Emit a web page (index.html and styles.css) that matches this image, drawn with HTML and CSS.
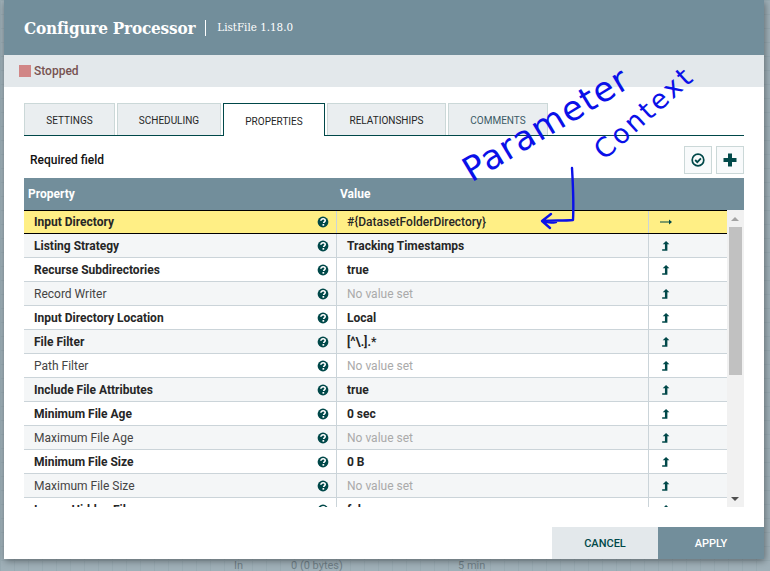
FILE: index.html
```html
<!DOCTYPE html>
<html lang="en">
<head>
<meta charset="utf-8">
<title>Configure Processor</title>
<link rel="stylesheet" href="styles.css">
</head>
<body>
<svg class="defs" width="0" height="0">
  <symbol id="q" viewBox="0 0 12 12"><circle cx="6" cy="6" r="5.400" fill="#004849"/><path d="M3.900 4.800c0-1.300 1-2 2.200-2s2.100.7 2.100 1.700c0 1.400-1.500 1.300-1.500 2.500" fill="none" stroke="#fff" stroke-width="1.600"/><rect x="5.500" y="8" width="1.700" height="1.700" fill="#fff"/></symbol>
  <symbol id="u" viewBox="0 0 8 9"><path d="M4.500 0L7.500 3H5.700V8.800H1V7.400H3.500V3H1.500z" fill="#004849"/></symbol>
</svg>
<div class="canvas">
  <div class="ghost ghost-in">In</div>
  <div class="ghost ghost-bytes">0 (0 bytes)</div>
  <div class="ghost ghost-min">5 min</div>
</div>
<main class="dialog">
  <header class="head">
    <h1 class="title">Configure Processor</h1>
    <span class="subtitle">ListFile 1.18.0</span>
  </header>
  <div class="status"><span class="square"></span><span class="status-text">Stopped</span></div>
  <div class="body">
    <nav class="tabs">
      <div class="tab">SETTINGS</div>
      <div class="tab t2">SCHEDULING</div>
      <div class="tab active">PROPERTIES</div>
      <div class="tab t4">RELATIONSHIPS</div>
      <div class="tab t5">COMMENTS</div>
    </nav>
    <div class="tools">
      <span class="req">Required field</span>
      <div class="btns">
        <button class="btn"><svg width="14" height="14" viewBox="0 0 14 14"><circle cx="7" cy="7" r="5.800" fill="none" stroke="#004849" stroke-width="1.700"/><path d="M4.200 7l2.100 2.100 3.600-3.700" fill="none" stroke="#004849" stroke-width="1.800"/></svg></button>
        <button class="btn"><svg width="14" height="14" viewBox="0 0 14 14"><path d="M5 .5h4V5h4.500v4H9v4.500H5V9H.5V5H5z" fill="#004849"/></svg></button>
      </div>
    </div>
    <div class="thead"><span class="th-prop">Property</span><span class="th-val">Value</span></div>
    <div class="grid">
      <div class="rows">
        <div class="row sel"><div class="c1 b">Input Directory<svg class="q"><use href="#q"/></svg></div><div class="c2">#{DatasetFolderDirectory}</div><div class="c3"><svg class="arr" viewBox="0 0 12 8"><path d="M0 3.500h9V1.500L12 4 9 6.500v-2H0z" fill="#004849"/></svg></div></div>
        <div class="row odd"><div class="c1 b">Listing Strategy<svg class="q"><use href="#q"/></svg></div><div class="c2 m">Tracking Timestamps</div><div class="c3"><svg class="up"><use href="#u"/></svg></div></div>
        <div class="row"><div class="c1 b">Recurse Subdirectories<svg class="q"><use href="#q"/></svg></div><div class="c2 m">true</div><div class="c3"><svg class="up"><use href="#u"/></svg></div></div>
        <div class="row odd"><div class="c1">Record Writer<svg class="q"><use href="#q"/></svg></div><div class="c2 none">No value set</div><div class="c3"><svg class="up"><use href="#u"/></svg></div></div>
        <div class="row"><div class="c1 b">Input Directory Location<svg class="q"><use href="#q"/></svg></div><div class="c2 m">Local</div><div class="c3"><svg class="up"><use href="#u"/></svg></div></div>
        <div class="row odd"><div class="c1 b">File Filter<svg class="q"><use href="#q"/></svg></div><div class="c2 m">[^\.].*</div><div class="c3"><svg class="up"><use href="#u"/></svg></div></div>
        <div class="row"><div class="c1">Path Filter<svg class="q"><use href="#q"/></svg></div><div class="c2 none">No value set</div><div class="c3"><svg class="up"><use href="#u"/></svg></div></div>
        <div class="row odd"><div class="c1 b">Include File Attributes<svg class="q"><use href="#q"/></svg></div><div class="c2 m">true</div><div class="c3"><svg class="up"><use href="#u"/></svg></div></div>
        <div class="row"><div class="c1 b">Minimum File Age<svg class="q"><use href="#q"/></svg></div><div class="c2 m">0 sec</div><div class="c3"><svg class="up"><use href="#u"/></svg></div></div>
        <div class="row odd"><div class="c1">Maximum File Age<svg class="q"><use href="#q"/></svg></div><div class="c2 none">No value set</div><div class="c3"><svg class="up"><use href="#u"/></svg></div></div>
        <div class="row"><div class="c1 b">Minimum File Size<svg class="q"><use href="#q"/></svg></div><div class="c2 m">0 B</div><div class="c3"><svg class="up"><use href="#u"/></svg></div></div>
        <div class="row odd"><div class="c1">Maximum File Size<svg class="q"><use href="#q"/></svg></div><div class="c2 none">No value set</div><div class="c3"><svg class="up"><use href="#u"/></svg></div></div>
        <div class="row"><div class="c1 b">Ignore Hidden Files<svg class="q"><use href="#q"/></svg></div><div class="c2 m">false</div><div class="c3"><svg class="up"><use href="#u"/></svg></div></div>
      </div>
      <div class="sb"><div class="sb-up"></div><div class="sb-thumb"></div><div class="sb-down"></div></div>
    </div>
  </div>
  <footer class="foot"><button class="f cancel">CANCEL</button><button class="f apply">APPLY</button></footer>
</main>
<div class="note note-a">Parameter</div>
<div class="note note-b">Context</div>
<svg class="hand" width="770" height="571" viewBox="0 0 770 571"><path d="M572 168c1 18 2 34 1 52-10 1-20 0-30 1m8-7l-9 7 8 7m-7-7c5 2 9 2 13 1" fill="none" stroke="#0a10e8" stroke-width="2.400" stroke-linecap="round" stroke-linejoin="round"/></svg>
</body>
</html>
```

FILE: styles.css
```css
* { box-sizing: border-box; }
html, body { margin: 0; padding: 0; }
body {
  width: 770px; height: 571px; overflow: hidden; position: relative;
  background: #9eafb7; font-family: Roboto, sans-serif; color: #262626;
}
.canvas { position: absolute; inset: 0; background-color: #9fb0b8;
  background-image: linear-gradient(#98aab2 1px, transparent 1px), linear-gradient(90deg, #98aab2 1px, transparent 1px);
  background-size: 14px 14px; }
.ghost { position: absolute; top: 560px; font-size: 11px; line-height: 11px; color: #6f7f87; }
.ghost-in { left: 234px; }
.ghost-bytes { left: 291px; }
.ghost-min { left: 458px; }
.dialog {
  position: absolute; left: 4px; top: 0; width: 760px; height: 559px;
  background: #fff; display: flex; flex-direction: column;
  box-shadow: 1px 2px 7px rgba(0,0,0,.4);
}
.head { height: 55px; background: #728e9b; color: #fff; display: flex; align-items: center; padding: 0 0 0 20px; flex: none; }
.title { margin: 0; font: 700 17px/16px "DejaVu Serif Condensed", "DejaVu Serif", serif; letter-spacing: -.2px; padding-right: 10px; border-right: 1px solid #fff; height: 16px; flex: none; }
.subtitle { font: 400 11.500px/1 "DejaVu Serif Condensed", "DejaVu Serif", serif; margin-left: 11px; }
.status { height: 32px; background: #e3e8eb; display: flex; align-items: center; padding-left: 15px; flex: none; }
.square { width: 12px; height: 12px; background: #d18686; margin-right: 3px; }
.status-text { font-size: 12px; font-weight: 500; color: #775351; }
.body { padding: 16px 20px 0; flex: 1; min-height: 0; }
.tabs { display: flex; height: 33px; border-bottom: 1px solid #004849; gap: 2px; }
.tab { width: 91px; height: 32px; padding-top: 2px; background: #eaeef0; border: 1px solid #cbd8d8; border-bottom: 0; font-size: 10px; font-weight: 400; color: #262626; display: flex; align-items: center; justify-content: center; }
.t2 { width: 104px; }
.active { width: 102px; height: 33px; background: #fff; border: 1px solid #004849; border-bottom: 0; }
.t4 { width: 119px; }
.t5 { width: 100px; color: #3b5a66; }
.tools { height: 42px; display: flex; align-items: center; justify-content: space-between; padding: 6px 0 0 6px; }
.req { font-size: 12px; font-weight: 500; color: #111; }
.btns { display: flex; gap: 4px; }
.btn { width: 28px; height: 28px; padding: 0; background: #f8fafb; border: 1px solid #cbd8d8; display: flex; align-items: center; justify-content: center; }
.thead { height: 32px; background: #728e9b; color: #fff; font-size: 12px; font-weight: 700; display: flex; align-items: center; }
.th-prop { width: 316px; padding-left: 4px; }
.grid { position: relative; display: flex; height: 297px; overflow: hidden; }
.rows { width: 703px; flex: none; }
.row { display: flex; height: 24px; border-bottom: 1px solid #cbd4d9; font-size: 12px; color: #262626; background: #fff; }
.row.odd { background: #f4f6f7; }
.row.sel { background: #ffef85; border-top: 1px solid #000; border-bottom: 1px solid #000; font-weight: 500; }
.c1 { width: 313px; padding: 0 7px 0 10px; display: flex; align-items: center; justify-content: space-between; border-right: 1px solid #cbd4d9; color: #444; }
.c1.b { font-weight: 700; color: #262626; }
.c2 { width: 312px; padding-left: 10px; display: flex; align-items: center; font-weight: 500; border-right: 1px solid #cbd4d9; }
.c2.m { font-weight: 700; }
.c2.none { color: #aaa; font-weight: 400; }
.c3 { flex: 1; display: flex; align-items: center; padding-left: 11px; }
.q { width: 12px; height: 12px; flex: none; }
.up { width: 9px; height: 10px; margin-left: 1px; }
.arr { width: 12px; height: 8px; }
.sb { width: 17px; flex: none; background: #f1f1f1; position: relative; }
.sb-thumb { position: absolute; left: 2px; width: 13px; top: 17px; height: 148px; background: #c1c1c1; }
.sb-up { position: absolute; left: 4px; top: 7px; border: 4px solid transparent; border-top: 0; border-bottom: 4px solid #a3a3a3; }
.sb-down { position: absolute; left: 4px; bottom: 6px; border: 4px solid transparent; border-bottom: 0; border-top: 4px solid #505050; }
.foot { height: 32px; flex: none; display: flex; justify-content: flex-end; }
.f { width: 106px; height: 32px; border: 0; font: 500 11px Roboto, sans-serif; }
.cancel { background: #e3e8eb; color: #004849; }
.apply { background: #728e9b; color: #fff; }
.defs { position: absolute; }
.note { position: absolute; color: #0a10e8; font-family: "DejaVu Sans", sans-serif; line-height: 1; transform-origin: left bottom; white-space: nowrap; }
.note-a { left: 474px; top: 153px; transform: rotate(-31deg); font-size: 34px; letter-spacing: 1.200px; }
.note-b { left: 607px; top: 137px; transform: rotate(-42deg); font-size: 27px; letter-spacing: 2.500px; }
.hand { position: absolute; left: 0; top: 0; pointer-events: none; }
```
